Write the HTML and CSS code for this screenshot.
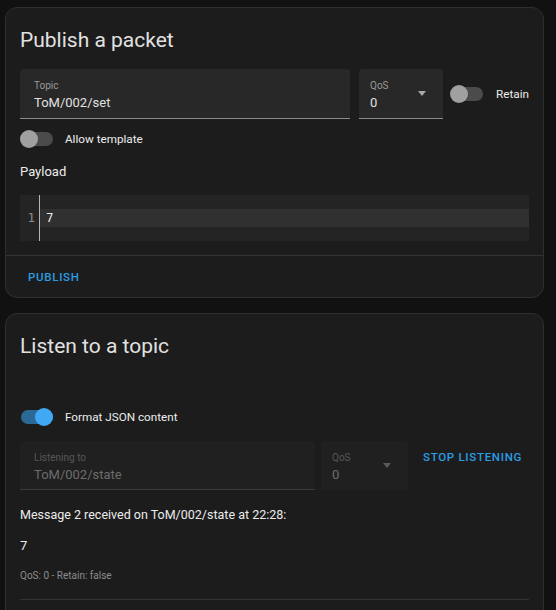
FILE: index.html
```html
<!DOCTYPE html>
<html>
<head>
<meta charset="utf-8">
<link rel="stylesheet" href="styles.css">
</head>
<body>
<div class="card card-publish">
  <div class="card-header"><h1 class="title">Publish a packet</h1></div>
  <div class="card-content">
    <div class="row-fields">
      <div class="field field-topic">
        <span class="field-label">Topic</span>
        <span class="field-value">ToM/002/set</span>
      </div>
      <div class="field field-qos">
        <span class="field-label">QoS</span>
        <span class="field-value">0</span>
        <span class="select-arrow"></span>
      </div>
      <span class="switch switch-retain"><span class="track"></span><span class="thumb"></span></span>
      <span class="switch-label label-retain">Retain</span>
    </div>
    <div class="row-switch row-template">
      <span class="switch"><span class="track"></span><span class="thumb"></span></span>
      <span class="switch-label">Allow template</span>
    </div>
    <div class="payload-label">Payload</div>
    <div class="editor">
      <div class="gutter"><span class="line-no">1</span></div>
      <div class="lines"><div class="line active">7</div></div>
    </div>
  </div>
  <div class="card-actions"><span class="text-button">PUBLISH</span></div>
</div>

<div class="card card-listen">
  <div class="card-header"><h1 class="title">Listen to a topic</h1></div>
  <div class="card-content listen-content">
    <div class="row-switch row-json">
      <span class="switch on"><span class="track"></span><span class="thumb"></span></span>
      <span class="switch-label">Format JSON content</span>
    </div>
    <div class="row-fields row-listen">
      <div class="field disabled field-listen">
        <span class="field-label">Listening to</span>
        <span class="field-value">ToM/002/state</span>
      </div>
      <div class="field disabled field-qos2">
        <span class="field-label">QoS</span>
        <span class="field-value">0</span>
        <span class="select-arrow"></span>
      </div>
      <span class="text-button stop-button">STOP LISTENING</span>
    </div>
    <div class="message-title">Message 2 received on ToM/002/state at 22:28:</div>
    <div class="message-payload">7</div>
    <div class="message-meta">QoS: 0 - Retain: false</div>
    <div class="divider"></div>
  </div>
</div>
</body>
</html>
```

FILE: styles.css
```css
html, body {
  margin: 0;
  padding: 0;
  background: #111111;
  font-family: Roboto, "Noto Sans", sans-serif;
  color: #e1e1e1;
  overflow: hidden;
}

.card {
  width: 539px;
  margin-left: 5px;
  box-sizing: border-box;
  background: #1c1c1c;
  border: 1px solid #2f2f2f;
  border-radius: 12px;
}

.card-publish {
  margin-top: 7px;
}

.card-listen {
  margin-top: 15px;
  padding-bottom: 40px;
}

.card-header {
  padding: 16px 14px 0;
}

.title {
  margin: 0;
  font-size: 21px;
  line-height: 32px;
  font-weight: 400;
  color: #e1e1e1;
}

.card-content {
  padding: 13px 14px 14px;
}

.row-fields {
  display: flex;
  align-items: center;
  height: 50px;
}

.field {
  position: relative;
  box-sizing: border-box;
  height: 50px;
  background: #282828;
  border-bottom: 1px solid #8c8c8c;
  border-radius: 4px 4px 0 0;
  padding: 11px 14px 0;
  display: flex;
  flex-direction: column;
}

.field-topic {
  width: 330px;
  flex: none;
}

.field-qos {
  width: 86px;
  margin-left: 9px;
  padding-left: 11px;
}

.field-label {
  font-size: 10px;
  line-height: 12px;
  color: #9a9a9a;
}

.field-value {
  margin-top: 2px;
  font-size: 13px;
  line-height: 18px;
  color: #e1e1e1;
}

.select-arrow {
  position: absolute;
  right: 17px;
  top: 22px;
  width: 0;
  height: 0;
  border-left: 4.5px solid transparent;
  border-right: 4.5px solid transparent;
  border-top: 5px solid #a8a8a8;
}

.switch {
  position: relative;
  display: inline-block;
  width: 33px;
  height: 18px;
  flex: none;
}

.switch .track {
  position: absolute;
  left: 1px;
  top: 2px;
  width: 32px;
  height: 14px;
  border-radius: 7px;
  background: #4b4b4b;
}

.switch .thumb {
  position: absolute;
  left: 0;
  top: 0;
  width: 18px;
  height: 18px;
  border-radius: 50%;
  background: #a0a0a0;
}

.switch.on .track {
  background: #2b6a97;
}

.switch.on .thumb {
  left: 15px;
  background: #41a9f4;
}

.switch-retain {
  margin-left: 7px;
}

.switch-label {
  font-size: 11.7px;
  line-height: 16px;
  font-weight: 400;
  color: #ececec;
}

.label-retain {
  margin-left: 13px;
}

.row-switch {
  display: flex;
  align-items: center;
  gap: 12px;
  height: 18px;
}

.row-template {
  margin-top: 11px;
}

.payload-label {
  margin-top: 16px;
  font-size: 13px;
  line-height: 16px;
  font-weight: 400;
  color: #ececec;
}

.editor {
  margin-top: 15px;
  height: 46px;
  display: flex;
  background: #242424;
  font-family: "DejaVu Sans Mono", "Liberation Mono", monospace;
  font-size: 12.5px;
}

.gutter {
  width: 20px;
  box-sizing: border-box;
  border-right: 1px solid #b5b5b5;
  padding-top: 14px;
  padding-right: 4px;
  text-align: right;
}

.line-no {
  display: block;
  line-height: 18px;
  color: #8a8a8a;
}

.lines {
  flex: 1;
  padding-top: 14px;
}

.line {
  height: 18px;
  line-height: 18px;
  padding-left: 6px;
  color: #e8e8e8;
}

.line.active {
  background: #303030;
}

.card-actions {
  border-top: 1px solid #333333;
  height: 41px;
  box-sizing: content-box;
  display: flex;
  align-items: center;
  padding: 0 0 2px 22px;
  margin-bottom: -2px;
}

.text-button {
  font-size: 11.5px;
  font-weight: 500;
  letter-spacing: 0.7px;
  color: #2b9de4;
  line-height: 16px;
}

.listen-content {
  padding-top: 0;
}

.row-json {
  margin-top: 46px;
}

.row-listen {
  margin-top: 15px;
  height: 49px;
  align-items: flex-start;
}

.field.disabled {
  height: 49px;
  background: #202020;
  border-bottom-color: #3a3a3a;
}

.field.disabled .field-label {
  color: #575757;
}

.field.disabled .field-value {
  color: #6d6d6d;
}

.field.disabled .select-arrow {
  border-top-color: #5a5a5a;
}

.field-listen {
  width: 295px;
}

.field-qos2 {
  width: 87px;
  margin-left: 6px;
  padding-left: 11px;
  border-bottom: none;
}

.stop-button {
  margin-left: 15px;
  margin-top: 8px;
}

.message-title {
  margin-top: 17px;
  font-size: 12.5px;
  line-height: 16px;
  color: #ececec;
}

.message-payload {
  margin-top: 15px;
  font-size: 13px;
  line-height: 16px;
  color: #ececec;
}

.message-meta {
  margin-top: 15px;
  font-size: 10px;
  line-height: 14px;
  color: #8c8c8c;
}

.divider {
  margin-top: 16px;
  height: 1px;
  background: #333333;
}
```
